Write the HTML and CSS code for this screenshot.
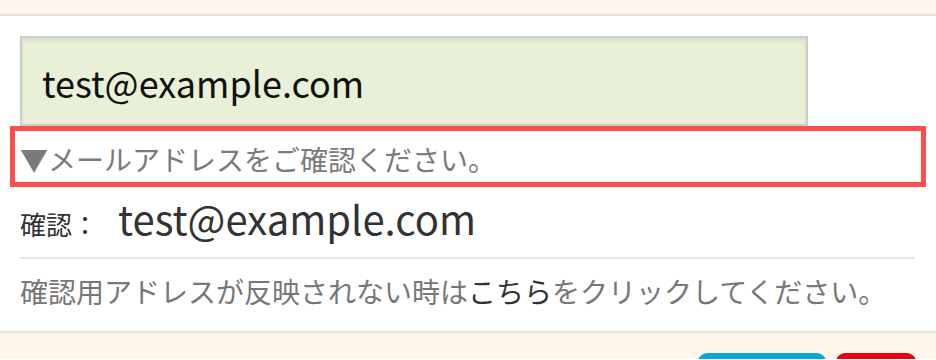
FILE: index.html
```html
<!DOCTYPE html>
<html lang="ja">
<head>
<meta charset="utf-8">
<link rel="stylesheet" href="styles.css">
</head>
<body>
<div class="topband"></div>
<main class="content">
  <div class="email-input">test@example.com</div>
  <div class="hint-box"><p class="hint">▼メールアドレスをご確認ください。</p></div>
  <div class="confirm-row">
    <span class="confirm-label">確認：</span>
    <span class="confirm-value">test@example.com</span>
  </div>
  <p class="note">確認用アドレスが反映されない時は<a class="note-link" href="#">こちら</a>をクリックしてください。</p>
</main>
<footer class="footer">
  <div class="buttons">
    <span class="btn btn-blue"></span>
    <span class="btn btn-red"></span>
  </div>
</footer>
</body>
</html>
```
FILE: styles.css
```css
* { box-sizing: border-box; }
html, body {
  margin: 0;
  padding: 0;
  background: #fff;
  font-family: "Noto Sans CJK JP", "Noto Sans", sans-serif;
  overflow: hidden;
}
.topband {
  height: 16px;
  background: #fff5ea;
  border-bottom: 2px solid #e2e2e2;
}
.content {
  padding: 20px 21px 0 20px;
}
.email-input {
  width: 788px;
  height: 90px;
  border: 2px solid #cccccc;
  background: #e8f0d7;
  box-shadow: inset 0 3px 5px rgba(0, 0, 0, 0.07);
  padding: 2px 0 0 20px;
  display: flex;
  align-items: center;
  font-size: 36px;
  color: #111;
}
.hint-box {
  margin: 0 -11px 0 -10px;
  border: 5px solid #fe4d4f;
  height: 61px;
  padding: 0 0 0 5px;
  display: flex;
  align-items: center;
}
.hint {
  margin: 0;
  font-size: 28px;
  color: #7a7a7a;
  line-height: 1;
  padding-top: 4px;
}
.confirm-row {
  display: flex;
  align-items: baseline;
  height: 72px;
  padding-top: 2px;
  border-bottom: 2px solid #e5e5e5;
}
.confirm-label {
  font-size: 26px;
  color: #333;
  width: 98px;
}
.confirm-value {
  font-size: 40px;
  color: #333;
}
.note {
  margin: 0;
  height: 72px;
  padding-top: 16px;
  font-size: 28px;
  color: #777;
  line-height: 1.2;
}
.note-link {
  color: #333;
  text-decoration: none;
}
.footer {
  background: #fff5ea;
  border-top: 2px solid #e2e2e2;
  height: 28px;
  padding: 20px 20px 0 0;
  overflow: hidden;
}
.buttons {
  display: flex;
  justify-content: flex-end;
  gap: 10px;
}
.btn {
  display: block;
  height: 40px;
  border-radius: 9px;
}
.btn-blue { width: 128px; background: #0aa6d8; }
.btn-red { width: 80px; background: #e60012; }
```
